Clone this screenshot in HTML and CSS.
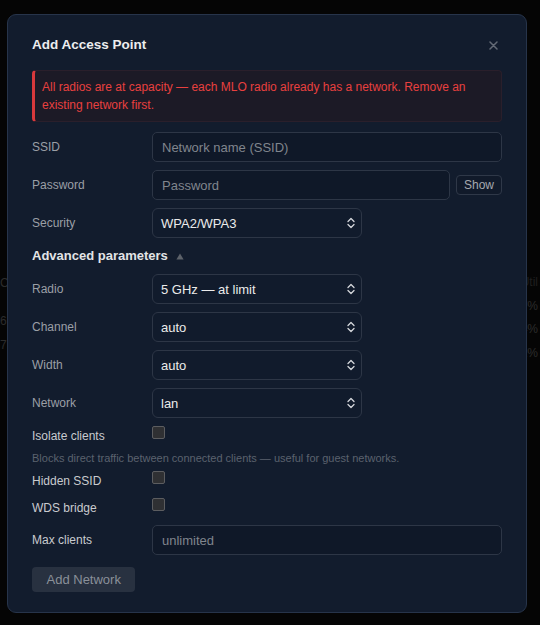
FILE: index.html
```html
<!DOCTYPE html>
<html lang="en">
<head>
<meta charset="utf-8">
<title>Add Access Point</title>
<link rel="stylesheet" href="styles.css">
</head>
<body>
<div class="backdrop">
  <div class="bg-col bg-left">
    <div class="bg-cell">Ch</div>
    <div class="bg-cell bg-gap">6</div>
    <div class="bg-cell">7</div>
  </div>
  <div class="bg-col bg-right">
    <div class="bg-cell bg-head">Util</div>
    <div class="bg-cell">17%</div>
    <div class="bg-cell">4%</div>
    <div class="bg-cell">2%</div>
  </div>
</div>

<div class="overlay">
  <div class="modal">
    <div class="modal-head">
      <h2 class="title">Add Access Point</h2>
      <button class="close" type="button" aria-label="Close">
        <svg width="9" height="9" viewBox="0 0 9 9"><path d="M1 1 L8 8 M8 1 L1 8" stroke="#636a75" stroke-width="1.5" stroke-linecap="round"/></svg>
      </button>
    </div>

    <div class="alert">All radios are at capacity — each MLO radio already has a network. Remove an existing network first.</div>

    <form class="form">
      <div class="row">
        <label class="label">SSID</label>
        <input class="input" type="text" placeholder="Network name (SSID)">
      </div>
      <div class="row">
        <label class="label">Password</label>
        <div class="pw">
          <input class="input" type="password" placeholder="Password">
          <button class="show" type="button">Show</button>
        </div>
      </div>
      <div class="row">
        <label class="label">Security</label>
        <div class="select"><span>WPA2/WPA3</span><svg class="chev" width="8" height="12" viewBox="0 0 8 12"><path d="M1 4.5 L4 1.5 L7 4.5 M1 7.5 L4 10.5 L7 7.5" fill="none" stroke="#d4d6da" stroke-width="1.3" stroke-linecap="round" stroke-linejoin="round"/></svg></div>
      </div>

      <div class="adv">Advanced parameters <svg class="tri" width="8" height="7" viewBox="0 0 8 7"><path d="M4 0.5 L7.6 6.5 L0.4 6.5 Z" fill="#5d626a"/></svg></div>

      <div class="row">
        <label class="label">Radio</label>
        <div class="select"><span>5 GHz — at limit</span><svg class="chev" width="8" height="12" viewBox="0 0 8 12"><path d="M1 4.5 L4 1.5 L7 4.5 M1 7.5 L4 10.5 L7 7.5" fill="none" stroke="#d4d6da" stroke-width="1.3" stroke-linecap="round" stroke-linejoin="round"/></svg></div>
      </div>
      <div class="row">
        <label class="label">Channel</label>
        <div class="select"><span>auto</span><svg class="chev" width="8" height="12" viewBox="0 0 8 12"><path d="M1 4.5 L4 1.5 L7 4.5 M1 7.5 L4 10.5 L7 7.5" fill="none" stroke="#d4d6da" stroke-width="1.3" stroke-linecap="round" stroke-linejoin="round"/></svg></div>
      </div>
      <div class="row">
        <label class="label">Width</label>
        <div class="select"><span>auto</span><svg class="chev" width="8" height="12" viewBox="0 0 8 12"><path d="M1 4.5 L4 1.5 L7 4.5 M1 7.5 L4 10.5 L7 7.5" fill="none" stroke="#d4d6da" stroke-width="1.3" stroke-linecap="round" stroke-linejoin="round"/></svg></div>
      </div>
      <div class="row">
        <label class="label">Network</label>
        <div class="select"><span>lan</span><svg class="chev" width="8" height="12" viewBox="0 0 8 12"><path d="M1 4.5 L4 1.5 L7 4.5 M1 7.5 L4 10.5 L7 7.5" fill="none" stroke="#d4d6da" stroke-width="1.3" stroke-linecap="round" stroke-linejoin="round"/></svg></div>
      </div>

      <div class="check-row">
        <label class="label label-light">Isolate clients</label>
        <input class="check" type="checkbox">
      </div>
      <div class="help">Blocks direct traffic between connected clients — useful for guest networks.</div>
      <div class="check-row check-hidden">
        <label class="label label-light">Hidden SSID</label>
        <input class="check" type="checkbox">
      </div>
      <div class="check-row">
        <label class="label label-light">WDS bridge</label>
        <input class="check" type="checkbox">
      </div>
      <div class="row">
        <label class="label label-light">Max clients</label>
        <input class="input" type="text" placeholder="unlimited">
      </div>

      <div class="actions">
        <button class="submit" type="button" disabled>Add Network</button>
      </div>
    </form>
  </div>
</div>
</body>
</html>
```

FILE: styles.css
```css
* { box-sizing: border-box; }

html, body {
  margin: 0;
  height: 100%;
}

body {
  background: #050505;
  font-family: "Liberation Sans", Arial, Helvetica, sans-serif;
  overflow: hidden;
}

/* dimmed page behind the dialog */
.backdrop {
  display: flex;
  justify-content: space-between;
  color: #2c2c2c;
  font-size: 12px;
}
.bg-col {
  display: flex;
  flex-direction: column;
  white-space: nowrap;
}
.bg-left {
  padding-top: 275px;
  align-items: flex-start;
}
.bg-left .bg-cell { line-height: 16px; }
.bg-left .bg-gap { margin-top: 22px; }
.bg-left .bg-cell + .bg-cell:not(.bg-gap) { margin-top: 8px; }

.bg-right {
  padding-top: 271px;
  padding-right: 2px;
  align-items: flex-end;
}
.bg-right .bg-cell { line-height: 23.7px; }
.bg-head { color: #1f1f1f; }

/* overlay */
.overlay {
  position: fixed;
  inset: 0;
  padding: 14px 0 0 7px;
}

.modal {
  width: 520px;
  background: #121c2d;
  border: 1px solid #27344a;
  border-radius: 9px;
  padding: 20px 24px 20px 24px;
}

.modal-head {
  display: flex;
  align-items: center;
  justify-content: space-between;
  height: 20px;
}
.title {
  margin: 0;
  font-size: 13.5px;
  line-height: 20px;
  font-weight: 700;
  color: #ecedef;
}
.close {
  background: none;
  border: 0;
  padding: 0;
  margin-right: 4px;
  width: 9px;
  height: 9px;
  display: flex;
}

.alert {
  margin-top: 15px;
  background: #1c1a26;
  border: 1px solid #2a1f2b;
  border-left: 3px solid #d8393c;
  border-radius: 4px;
  padding: 7px 8px 7px 7px;
  color: #e8403f;
  font-size: 12px;
  line-height: 18px;
}

.form {
  margin-top: 10px;
  display: flex;
  flex-direction: column;
  gap: 8px;
}

.row {
  display: flex;
  align-items: center;
}

.label {
  width: 120px;
  flex: none;
  font-size: 12px;
  line-height: 20px;
  color: #9b9fa6;
}
.label-light { color: #c9cbcf; }

.input {
  flex: 1;
  min-width: 0;
  height: 30px;
  margin: 0;
  padding: 0 9px;
  background: #0f1828;
  border: 1px solid #2d3646;
  border-radius: 5px;
  font-family: inherit;
  font-size: 13px;
  color: #e6e6e6;
  outline: none;
}
.input::placeholder { color: #80858d; }

.pw {
  flex: 1;
  display: flex;
  align-items: center;
  gap: 6px;
}
.show {
  flex: none;
  width: 46px;
  height: 20px;
  padding: 0;
  background: #111a2a;
  border: 1px solid #2f3848;
  border-radius: 4px;
  font-family: inherit;
  font-size: 12px;
  color: #a6a9ae;
}

.select {
  width: 210px;
  height: 30px;
  display: flex;
  align-items: center;
  justify-content: space-between;
  padding: 0 6px 0 8px;
  background: #111b2c;
  border: 1px solid #2d3646;
  border-radius: 6px;
  font-size: 13px;
  color: #ebebeb;
}
.chev { flex: none; }

.adv {
  display: flex;
  align-items: center;
  gap: 8px;
  font-size: 13px;
  font-weight: 700;
  line-height: 20px;
  color: #e3e4e6;
}
.tri { flex: none; }

.check-row {
  display: flex;
  align-items: flex-start;
  height: 19px;
}
.check {
  appearance: none;
  -webkit-appearance: none;
  margin: 0;
  width: 13px;
  height: 13px;
  background: #2f3033;
  border: 1px solid #5c5d60;
  border-radius: 2px;
}

.help {
  margin-top: -3px;
  font-size: 11px;
  line-height: 16px;
  color: #5b626d;
}
.check-hidden { margin-top: -3px; }

.actions {
  margin-top: 4px;
  display: flex;
}
.submit {
  height: 25px;
  padding: 0 14.5px;
  background: #283140;
  border: 0;
  border-radius: 4px;
  font-family: inherit;
  font-size: 13px;
  color: #8a9099;
}
```
